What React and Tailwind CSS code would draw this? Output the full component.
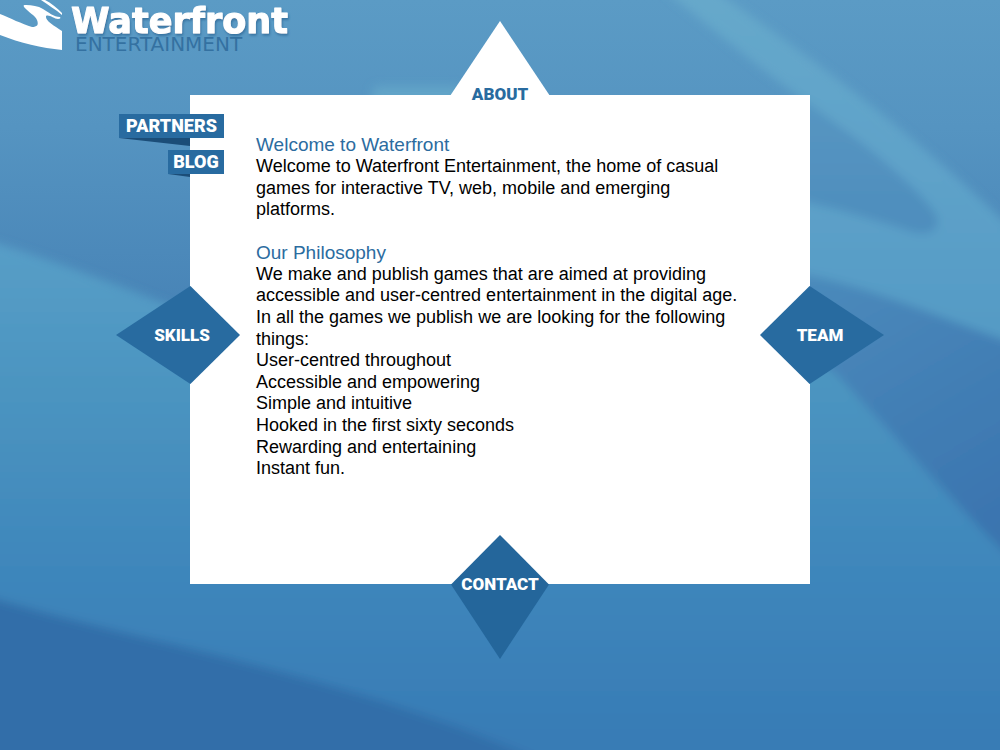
const diamond = "absolute z-10 flex items-center justify-center font-['Roboto'] text-[17px] font-black text-white";

function Backdrop() {
  return (
    <svg
      className="absolute inset-0 h-full w-full"
      viewBox="0 0 1000 750"
      preserveAspectRatio="none"
      aria-hidden="true"
    >
      <defs>
        <linearGradient id="sky" gradientUnits="userSpaceOnUse" x1="0" y1="0" x2="0" y2="320">
          <stop offset="0" stopColor="#5b9bc5" />
          <stop offset="0.4" stopColor="#5594c1" />
          <stop offset="1" stopColor="#4783b6" />
        </linearGradient>
        <linearGradient id="wave" gradientUnits="userSpaceOnUse" x1="0" y1="240" x2="0" y2="750">
          <stop offset="0" stopColor="#579ec7" />
          <stop offset="0.3" stopColor="#4b94c0" />
          <stop offset="0.65" stopColor="#3e86bb" />
          <stop offset="1" stopColor="#377bb5" />
        </linearGradient>
        <linearGradient id="swirl" gradientUnits="userSpaceOnUse" x1="0" y1="0" x2="0" y2="340">
          <stop offset="0" stopColor="#66a8ca" />
          <stop offset="0.5" stopColor="#5ea2c9" />
          <stop offset="1" stopColor="#549ac5" />
        </linearGradient>
        <linearGradient id="upper" gradientUnits="userSpaceOnUse" x1="0" y1="0" x2="0" y2="230">
          <stop offset="0" stopColor="#5c9cc5" />
          <stop offset="1" stopColor="#4e8dbd" />
        </linearGradient>
        <linearGradient id="right" gradientUnits="userSpaceOnUse" x1="820" y1="270" x2="980" y2="540">
          <stop offset="0" stopColor="#4b8abb" />
          <stop offset="1" stopColor="#3a74af" />
        </linearGradient>
        <filter id="soft" x="-20%" y="-20%" width="140%" height="140%">
          <feGaussianBlur stdDeviation="5" />
        </filter>
      </defs>
      <rect width="1000" height="750" fill="url(#sky)" />
      <g filter="url(#soft)">
        <path d="M-20 238C60 262 120 286 200 317L500 420L790 340L840 370C900 440 950 500 1020 560V770H-20Z" fill="url(#wave)" />
        <path d="M790 267C870 282 935 312 1020 342V568C950 500 900 440 836 374L790 345Z" fill="url(#right)" />
        <path d="M-20 594C120 639 360 675 560 770H-20Z" fill="#336ea9" />
        <path d="M652 -20H700C800 50 900 120 1020 236V346C935 316 870 286 790 271V90C750 60 704 22 652 -20Z" fill="url(#swirl)" />
        <path d="M790 90C850 132 915 182 937 216C940 232 928 236 910 231C870 218 840 210 790 198Z" fill="url(#upper)" />
        <rect x="372" y="86" width="90" height="20" rx="8" fill="#62a4c8" />
      </g>
    </svg>
  );
}

function Logo() {
  return (
    <svg className="h-14 w-[300px]" viewBox="0 0 300 56" role="img" aria-label="Waterfront Entertainment">
      <defs>
        <filter id="drop" x="-5%" y="-10%" width="110%" height="130%">
          <feDropShadow dx="1" dy="2" stdDeviation="1" floodColor="#2f6a99" floodOpacity="0.8" />
        </filter>
      </defs>
      <path
        d="M0 14C10 18 22 24 32 27C37 27 39 25 37 20C35 15 29 13 24 7C23 5 24 5 26 5C32 5 38 6 43 9C48 12 54 17 60 17C61 18 60 19 58 19C54 19 49 14 46 16C45 21 55 26 62 31V50C42 48 20 43 0 35Z"
        fill="#fff"
      />
      <path d="M41 0H45C51 3 57 8 62 13V15C55 9 48 5 41 0Z" fill="#fff" />
      <text x="75" y="51" fontSize="20" fill="#3471a1" className="font-['DejaVu_Sans']">
        ENTERTAINMENT
      </text>
      <text
        x="71"
        y="33"
        fontSize="35"
        fill="#fff"
        stroke="#fff"
        strokeWidth="1"
        strokeLinejoin="round"
        filter="url(#drop)"
        className="font-['DejaVu_Sans'] font-bold"
      >
        Waterfront
      </text>
    </svg>
  );
}

export default function App() {
  return (
    <div className="relative isolate flex min-h-screen flex-col overflow-hidden font-['Liberation_Sans',sans-serif]">
      <Backdrop />
      <header className="relative h-[95px]">
        <a href="#home" className="block w-fit">
          <Logo />
        </a>
      </header>
      <main className="relative mx-auto min-h-[489px] w-full max-w-[620px] bg-white px-[66px] pt-[39px] pb-16">
        <nav aria-label="Main">
          <a
            href="#about"
            className="absolute -top-[74px] left-1/2 flex h-[84px] w-[112px] -translate-x-1/2 items-end justify-center bg-white pb-px font-['Roboto'] text-[17px] leading-5 font-black text-[#286b9f] [clip-path:polygon(50%_0,100%_100%,0_100%)]"
          >
            ABOUT
          </a>
          <a
            href="#skills"
            className={`${diamond} top-[191px] -left-[74px] h-[98px] w-[124px] bg-[#286ba0] pt-px pl-2 [clip-path:polygon(60%_0,100%_50%,60%_100%,0_50%)]`}
          >
            SKILLS
          </a>
          <a
            href="#team"
            className={`${diamond} top-[191px] -right-[74px] h-[98px] w-[124px] bg-[#286ba0] pt-px pr-1 [clip-path:polygon(40%_0,100%_50%,40%_100%,0_50%)]`}
          >
            TEAM
          </a>
          <a
            href="#contact"
            className={`${diamond} -bottom-[75px] left-1/2 h-[124px] w-[98px] -translate-x-1/2 bg-[#24669b] pb-6 [clip-path:polygon(50%_0,100%_40%,50%_100%,0_40%)]`}
          >
            CONTACT
          </a>
          <div className="absolute top-[19px] right-full -mr-[34px] flex flex-col items-end gap-3 font-['Roboto'] text-lg leading-6 font-black text-white">
            <a href="#partners" className="relative flex w-[105px] justify-center bg-[#286ba0]">
              PARTNERS
              <span className="absolute top-full left-0 h-2 w-[71px] bg-[#1b4d78] [clip-path:polygon(0_0,100%_0,100%_100%)]" />
            </a>
            <a href="#blog" className="relative flex w-14 justify-center bg-[#286ba0]">
              BLOG
              <span className="absolute top-full left-0 h-[3px] w-[22px] bg-[#1b4d78] [clip-path:polygon(0_0,100%_0,100%_100%)]" />
            </a>
          </div>
        </nav>
        <article className="text-lg leading-[1.2] text-black">
          <section>
            <h1 className="text-[19px] leading-[22px] text-[#2c6c9f]">Welcome to Waterfront</h1>
            <p>
              Welcome to Waterfront Entertainment, the home of casual games for interactive TV, web, mobile and
              emerging platforms.
            </p>
          </section>
          <section className="mt-[21px]">
            <h2 className="text-[19px] leading-[22px] text-[#2c6c9f]">Our Philosophy</h2>
            <p>
              We make and publish games that are aimed at providing accessible and user-centred entertainment in the
              digital age. In all the games we publish we are looking for the following things:
            </p>
            <ul>
              <li>User-centred throughout</li>
              <li>Accessible and empowering</li>
              <li>Simple and intuitive</li>
              <li>Hooked in the first sixty seconds</li>
              <li>Rewarding and entertaining</li>
              <li>Instant fun.</li>
            </ul>
          </section>
        </article>
      </main>
    </div>
  );
}
